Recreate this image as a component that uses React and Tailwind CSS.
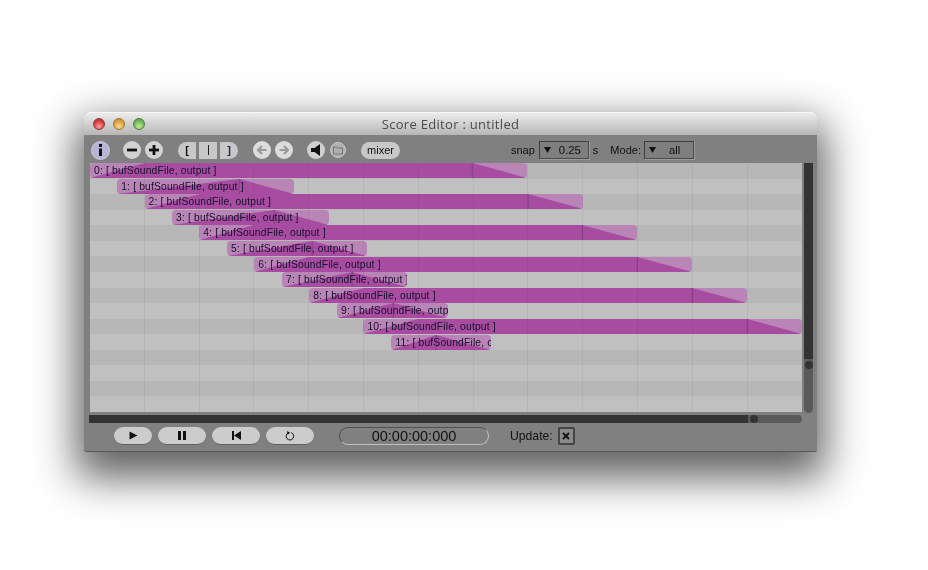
import React from "react";

const UNIT = 54.8;
const ROW = 15.6;
const bars = [
  [0, 437], [27.2, 177], [54.6, 438], [82, 157], [109.2, 438], [137, 140],
  [164.2, 438], [192, 125], [219.2, 438], [247, 111], [273.4, 439], [301.4, 100],
];

function Bar({ i, x, w }) {
  const even = i % 2 === 0;
  const h = 15;
  const pts = even
    ? `0,${h} ${UNIT},0 ${w - UNIT},0 ${w},${h}`
    : `0,${h} ${w - UNIT},0 ${w},${h}`;
  const peak = w - UNIT;
  return (
    <div
      className="absolute h-[15px] rounded-[4px] overflow-hidden bg-[#b985b7]"
      style={{ left: x, top: i * ROW, width: w }}
    >
      <svg className="absolute inset-0" width={w} height={h}>
        <polygon points={pts} fill="#a84ca2" />
        <line x1={peak} y1="0" x2={peak} y2={h} stroke="#84407f" strokeWidth="1" />
      </svg>
      <span className="absolute left-[4px] top-0 leading-[15px] text-[10.3px] text-[#14102a] whitespace-nowrap tracking-[0.17px]">
        {i}: [ bufSoundFile, output ]
      </span>
    </div>
  );
}

function Round({ children, className }) {
  return (
    <div className={"rounded-full flex items-center justify-center shrink-0 " + className}>
      {children}
    </div>
  );
}

function Transport({ w, children, className = "" }) {
  return (
    <div className={"h-[18px] rounded-full bg-[#cccccc] border-b border-[#5f5f5f] flex items-center justify-center shrink-0 " + className} style={{ width: w }}>
      {children}
    </div>
  );
}

function Drop({ value, valueClass }) {
  return (
    <div className="relative w-[50px] h-[18px] border border-t-[#3f3f3f] border-l-[#3f3f3f] border-r-[#4a4a4a] border-b-[#4a4a4a] bg-[#7e7e7e] flex items-center shadow-[1px_1px_0_#9a9a9a]">
      <svg width="7" height="6" className="ml-[4px]" viewBox="0 0 7 6"><polygon points="0,0 7,0 3.5,6" fill="#111" /></svg>
      <span className={"text-[11.3px] text-[#111] " + valueClass}>{value}</span>
    </div>
  );
}

export default function App() {
  return (
    <div className="w-[928px] h-[570px] bg-white overflow-hidden pt-[112px] pl-[84px] font-['Liberation_Sans',sans-serif]">
      <div className="w-[733px] h-[340px] rounded-t-[5px] rounded-b-[3px] bg-[#808080] shadow-[0_18px_42px_8px_rgba(0,0,0,0.62)]">
        <div className="w-full h-full flex flex-col border-b border-[#5a5a5a] rounded-t-[5px] rounded-b-[3px] blur-[0.3px]">
          {/* Title bar */}
          <div className="relative h-[23px] shrink-0 rounded-t-[5px] bg-gradient-to-b from-[#ececec] to-[#b6b6b6] border-t border-[#f6f6f6] flex items-center justify-center">
            <div className="absolute left-[9px] top-[5px] flex gap-[8px]">
              <div className="w-[12px] h-[12px] rounded-full border border-[#8c3a3a] bg-[radial-gradient(circle_at_50%_75%,#f9a0a0,#d83a3a_60%,#a92a2a)]" />
              <div className="w-[12px] h-[12px] rounded-full border border-[#9c7a30] bg-[radial-gradient(circle_at_50%_75%,#fbd890,#e0a040_60%,#b07d28)]" />
              <div className="w-[12px] h-[12px] rounded-full border border-[#4e8038] bg-[radial-gradient(circle_at_50%_75%,#bfe8a0,#72b858_60%,#4e8e38)]" />
            </div>
            <span className="text-[13px] text-[#4c4c4c] font-['Open_Sans',sans-serif] tracking-[0.3px] pt-[1px]">Score Editor : untitled</span>
          </div>

          {/* Toolbar */}
          <div className="h-[28px] shrink-0 flex items-center pl-[7px] pt-[2px]">
            <Round className="w-[19px] h-[19px] bg-[#b5b5d6] border border-[#c8c8d8]">
              <svg width="5" height="12" viewBox="0 0 5 12"><rect x="1" y="0" width="3" height="3" fill="#111" /><rect x="1" y="4.5" width="3" height="7.5" fill="#111" /></svg>
            </Round>
            <Round className="w-[18px] h-[18px] bg-[#d2d2d2] ml-[13px]">
              <svg width="10" height="10" viewBox="0 0 10 10"><rect x="0" y="3.6" width="10" height="2.8" fill="#111" /></svg>
            </Round>
            <Round className="w-[18px] h-[18px] bg-[#d2d2d2] ml-[4px]">
              <svg width="10" height="10" viewBox="0 0 10 10"><rect x="0" y="3.6" width="10" height="2.8" fill="#111" /><rect x="3.6" y="0" width="2.8" height="10" fill="#111" /></svg>
            </Round>
            <div className="w-[18px] h-[17px] ml-[15px] bg-[#c8c8c8] rounded-l-full flex items-center justify-center">
              <span className="text-[11px] font-bold leading-none text-[#111]">[</span>
            </div>
            <div className="w-[18px] h-[17px] ml-[3px] bg-[#c8c8c8] flex items-center justify-center">
              <span className="w-[1px] h-[10px] bg-[#222]" />
            </div>
            <div className="w-[18px] h-[17px] ml-[3px] bg-[#c8c8c8] rounded-r-full flex items-center justify-center">
              <span className="text-[11px] font-bold leading-none text-[#1a2a55]">]</span>
            </div>
            <Round className="w-[18px] h-[18px] bg-[#dcdcdc] ml-[15px]">
              <svg width="10" height="10" viewBox="0 0 10 10"><path d="M5 1 L1 5 L5 9 M1 5 H9.5" stroke="#9a9a9a" strokeWidth="2.2" fill="none" /></svg>
            </Round>
            <Round className="w-[18px] h-[18px] bg-[#dcdcdc] ml-[4px]">
              <svg width="10" height="10" viewBox="0 0 10 10"><path d="M5 1 L9 5 L5 9 M9 5 H0.5" stroke="#9a9a9a" strokeWidth="2.2" fill="none" /></svg>
            </Round>
            <Round className="w-[18px] h-[18px] bg-[#d0d0d0] ml-[14px]">
              <svg width="12" height="12" viewBox="0 0 12 12"><polygon points="1,4 4.5,4 10,0 10,12 4.5,8 1,8" fill="#111" /></svg>
            </Round>
            <Round className="w-[16px] h-[16px] bg-[#b0b0b0] border border-[#c8c8c8] ml-[5px]">
              <svg width="10" height="9" viewBox="0 0 10 9"><path d="M0.5 8 V1 H3.5 L4.5 2 H9.5 V8 Z" stroke="#777" strokeWidth="1" fill="none" /></svg>
            </Round>
            <div className="w-[39px] h-[17px] ml-[15px] rounded-full bg-[#c8c8c8] flex items-center justify-center text-[11px] text-[#111] shrink-0">mixer</div>
            <span className="ml-[111px] text-[11px] text-[#111]">snap</span>
            <div className="ml-[4px]"><Drop value="0.25" valueClass="ml-[8px]" /></div>
            <span className="ml-[4px] text-[11px] text-[#111]">s</span>
            <span className="ml-[12px] text-[11px] text-[#111]">Mode:</span>
            <div className="ml-[3px]"><Drop value="all" valueClass="ml-[13px]" /></div>
          </div>

          {/* Score + vertical scrollbar */}
          <div className="h-[249px] shrink-0 flex pl-[6px]">
            <div className="relative w-[712px] h-full flex flex-col overflow-hidden">
              {Array.from({ length: 16 }, (_, i) => (
                <div key={i} className={"flex-1 " + (i % 2 === 0 ? "bg-[#b7b7b7]" : "bg-[#c0c0c0]")} />
              ))}
              {bars.map(([x, w], i) => <Bar key={i} i={i} x={x} w={w} />)}
              {Array.from({ length: 12 }, (_, i) => (
                <div key={i} className="absolute top-0 bottom-0 w-px bg-black/5" style={{ left: Math.round(UNIT * (i + 1) - 1) }} />
              ))}
            </div>
            <div className="relative w-[9px] ml-[2px] h-[250px] rounded-b-full bg-[#5a5a5a]">
              <div className="h-[196px] bg-[#333333]" />
              <div className="absolute left-[0.5px] top-[198px] w-[8px] h-[8px] rounded-full bg-[#333333]" />
            </div>
          </div>

          {/* Horizontal scrollbar */}
          <div className="relative ml-[5px] mt-[3px] w-[713px] h-[8px] shrink-0 rounded-r-full bg-[#5a5a5a]">
            <div className="w-[659px] h-full bg-[#333333]" />
            <div className="absolute left-[661px] top-0 w-[8px] h-[8px] rounded-full bg-[#333333]" />
          </div>

          {/* Transport */}
          <div className="flex items-center mt-[4px] h-[18px] shrink-0 pl-[30px]">
            <Transport w={38}>
              <svg width="9" height="9" viewBox="0 0 9 9"><polygon points="0.5,0.5 8.5,4.5 0.5,8.5" fill="#111" /></svg>
            </Transport>
            <Transport w={48} className="ml-[6px]">
              <svg width="8" height="9" viewBox="0 0 8 9"><rect x="0" y="0" width="3" height="9" fill="#111" /><rect x="5" y="0" width="3" height="9" fill="#111" /></svg>
            </Transport>
            <Transport w={48} className="ml-[6px]">
              <svg width="9" height="9" viewBox="0 0 9 9"><rect x="0" y="0" width="2" height="9" fill="#111" /><polygon points="9,0 9,9 2,4.5" fill="#111" /></svg>
            </Transport>
            <Transport w={48} className="ml-[6px]">
              <svg width="10" height="10" viewBox="0 0 10 10"><path d="M3.2 1.8 A3.8 3.8 0 1 0 6.2 1.6" stroke="#111" strokeWidth="1" fill="none" /><polygon points="2,0 5.2,1.8 2.6,3.8" fill="#111" /></svg>
            </Transport>
            <div className="w-[150px] h-[18px] ml-[25px] rounded-full border border-[#4f4f4f] border-r-[#c0c0c0] border-b-[#c0c0c0] flex items-center justify-center text-[14.5px] text-[#111] shrink-0 pt-[1px]">
              00:00:00:000
            </div>
            <span className="ml-[21px] text-[12.2px] text-[#111]">Update:</span>
            <div className="w-[17px] h-[18px] ml-[5px] border-2 border-[#444] rounded-[2px] bg-[#8a8a8a] flex items-center justify-center">
              <svg width="8" height="8" viewBox="0 0 8 8"><path d="M1 1 L7 7 M7 1 L1 7" stroke="#111" strokeWidth="1.8" /></svg>
            </div>
          </div>
        </div>
      </div>
    </div>
  );
}
